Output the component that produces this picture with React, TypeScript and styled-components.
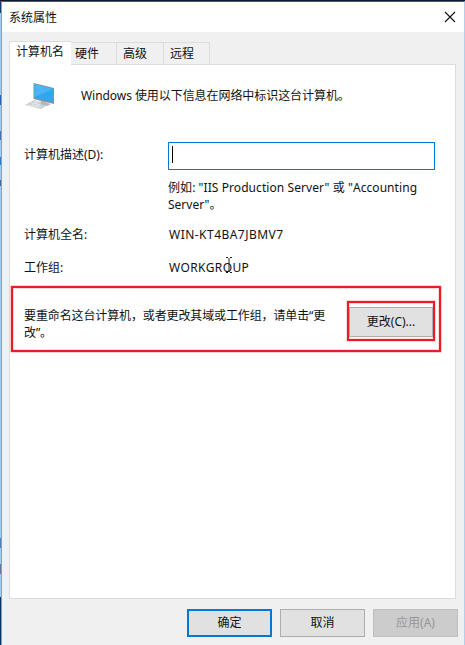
import React from "react";
import styled, { createGlobalStyle } from "styled-components";

const GlobalStyle = createGlobalStyle`
  * { box-sizing: border-box; }
  html, body { margin: 0; padding: 0; overflow: hidden; }
`;

const Desktop = styled.div`
  width: 465px;
  height: 645px;
  padding: 1px 0 0 1px;
  background:
    linear-gradient(#06192f, #06192f) 0 0 / 465px 1px no-repeat,
    linear-gradient(#2463ad, #2463ad) 0 95px / 1px 10px no-repeat,
    linear-gradient(#4a72b8, #4a72b8) 0 131px / 1px 9px no-repeat,
    linear-gradient(#2a7fd0, #2a7fd0) 0 157px / 1px 8px no-repeat,
    linear-gradient(#54649d, #54649d) 0 180px / 1px 6px no-repeat,
    linear-gradient(#4b83bf, #4b83bf) 0 538px / 1px 10px no-repeat,
    linear-gradient(#63779b, #63779b) 0 564px / 1px 10px no-repeat,
    linear-gradient(#123e70 0 13px, #a3cbee 13px 597px, #073361 597px);
  font-family: "Noto Sans", "Noto Sans CJK SC", sans-serif;
  font-size: 12px;
  color: #111;
`;

const Dialog = styled.main`
  height: 644px;
  display: flex;
  flex-direction: column;
  background: #f0f0f0;
  border: 1px solid #65a9df;
  border-top-color: #1869b0;
  border-right-color: #b4cfe9;
  border-bottom: 0;
`;

const TitleBar = styled.header`
  height: 30px;
  flex: none;
  display: flex;
  align-items: center;
  justify-content: space-between;
  padding: 0 8px 1px 7px;
  background: #fff;
  svg { display: block; }
`;

const TabBar = styled.nav`
  height: 32px;
  padding: 8px 0 0 7px;
  display: flex;
  align-items: flex-end;
`;

const Tab = styled.div<{ $w: number; $active?: boolean; $pad: number }>`
  width: ${(p) => p.$w}px;
  height: ${(p) => (p.$active ? 24 : 22)}px;
  margin-bottom: ${(p) => (p.$active ? -1 : 0)}px;
  padding-left: ${(p) => p.$pad}px;
  line-height: ${(p) => (p.$active ? 20 : 21)}px;
  white-space: nowrap;
  position: relative;
  z-index: ${(p) => (p.$active ? 1 : 0)};
  background: ${(p) => (p.$active ? "#fff" : "#f0f0f0")};
  border: 1px solid #dcdcdc;
  border-bottom-width: 0;
  border-left-width: ${(p) => (p.$active ? 1 : 0)}px;
  border-right-width: ${(p) => (p.$active ? 0 : 1)}px;
`;

const Panel = styled.section`
  width: 447px;
  height: 535px;
  margin-left: 7px;
  flex: none;
  background: #fff;
  border: 1px solid #dcdcdc;
`;

const Intro = styled.div`
  height: 77px;
  padding: 16px 0 0 13px;
  display: flex;
  svg { width: 36px; height: 30px; margin-right: 22px; }
`;

const IntroText = styled.p`
  margin: 7px 0 0;
  line-height: 16px;
  letter-spacing: -0.06px;
  white-space: nowrap;
`;

const Row = styled.div<{ $h: number }>`
  display: grid;
  grid-template-columns: 144px 267px;
  height: ${(p) => p.$h}px;
  padding-left: 14px;
  align-items: start;
  line-height: 16px;
`;

const Label = styled.label<{ $top?: number }>`
  padding-top: ${(p) => p.$top ?? 0}px;
  white-space: nowrap;
`;

const DescriptionField = styled.div`
  height: 28px;
  padding: 3px 0 0 3px;
  border: 1px solid #0078d7;
`;

const Caret = styled.div`
  width: 1px;
  height: 17px;
  background: #000;
`;

const Hint = styled.p`
  margin: 0;
  padding: 9px 0 0 0;
  line-height: 17px;
  white-space: nowrap;
`;

const Spaced = styled.span<{ $ls: number }>`
  letter-spacing: ${(p) => p.$ls}px;
`;

const Value = styled.div`
  padding-left: 1px;
  position: relative;
  white-space: nowrap;
`;

const TextCursor = styled.svg`
  position: absolute;
  left: 57px;
  top: -3px;
  width: 8px;
  height: 17px;
`;

const RenameRow = styled.div`
  width: 430px;
  height: 66px;
  margin-left: 1px;
  padding: 0 4px 0 11px;
  display: flex;
  justify-content: space-between;
  border: 2px solid #ed1c24;
  box-shadow: 0 0 0 0.5px #f6a5a8, inset 0 0 0 1px #fbdadb;
`;

const RenameText = styled.p`
  margin: 19px 0 0;
  line-height: 17px;
  letter-spacing: -0.12px;
  white-space: nowrap;
`;

const Highlight = styled.div`
  width: 88px;
  height: 40px;
  margin-top: 13px;
  padding: 4px 0 2px;
  border: 2px solid #ed1c24;
  box-shadow: 0 0 0 1px #fbdadb, inset 0 0 0 1px #fbdadb;
  background: #fff;
`;

const Button = styled.button<{ $kind?: "primary" | "disabled" | "inline" }>`
  display: block;
  width: ${(p) => (p.$kind === "inline" ? "100%" : "85px")};
  height: ${(p) => (p.$kind === "inline" ? 30 : 28)}px;
  padding: 0;
  font: inherit;
  line-height: 24px;
  color: ${(p) => (p.$kind === "disabled" ? "#969696" : "#111")};
  background: ${(p) => (p.$kind === "disabled" ? "#cccccc" : "#e1e1e1")};
  border: ${(p) =>
    p.$kind === "primary"
      ? "2px solid #0078d7"
      : p.$kind === "disabled"
        ? "1px solid #bfbfbf"
        : "1px solid #adadad"};
`;

const Footer = styled.footer`
  display: flex;
  justify-content: flex-end;
  gap: 8px;
  padding: 10px 6px 0 0;
`;

const ComputerIcon = () => (
  <svg viewBox="0 0 36 30" fill="none">
    <path d="m2 24 9-5 16 3-9 6z" fill="#c9cdd0" />
    <path d="m5 24 13 2m-10-4 13 2m-10-4 13 2M8 25l9-6m-5 7 9-5" stroke="#eef0f1" strokeWidth=".8" />
    <path d="m18 19 5 1v2l5 1-4 2-8-2 2-1z" fill="#b3b8bc" />
    <path d="m10.500 2 20.500 5v16l-20.500-5z" fill="#85939e" />
    <path d="m11.500 3 18.500 5v13l-18.500-4z" fill="#31a5ee" />
    <path d="m11.500 3 18.500 5-18.500 8z" fill="#4ab5f5" />
  </svg>
);

export default function App() {
  return (
    <>
      <GlobalStyle />
      <Desktop>
        <Dialog>
          <TitleBar>
            <span>系统属性</span>
            <svg width="12" height="12" viewBox="0 0 12 12">
              <path d="m1 1 10 10M11 1 1 11" stroke="#111" strokeWidth="1.1" />
            </svg>
          </TitleBar>
          <TabBar>
            <Tab $w={62} $pad={6} $active>计算机名</Tab>
            <Tab $w={46} $pad={4}>硬件</Tab>
            <Tab $w={47} $pad={6}>高级</Tab>
            <Tab $w={46} $pad={6}>远程</Tab>
          </TabBar>
          <Panel>
            <Intro>
              <ComputerIcon />
              <IntroText>Windows 使用以下信息在网络中标识这台计算机。</IntroText>
            </Intro>
            <Row $h={85}>
              <Label $top={5}>计算机描述(D):</Label>
              <div>
                <DescriptionField><Caret /></DescriptionField>
                <Hint>
                  <Spaced $ls={0.07}>例如: "IIS Production Server" 或 "Accounting</Spaced>
                  <br />
                  Server"。
                </Hint>
              </div>
            </Row>
            <Row $h={33}>
              <Label>计算机全名:</Label>
              <Value><Spaced $ls={0.47}>WIN-KT4BA7JBMV7</Spaced></Value>
            </Row>
            <Row $h={26}>
              <Label>工作组:</Label>
              <Value>
                <Spaced $ls={0.4}>WORKGROUP</Spaced>
                <TextCursor viewBox="0 0 8 17" fill="none" stroke="#222">
                  <path d="M1 .5h2M5 .5h2M1 15.5h2M5 15.5h2M4 1v14" />
                </TextCursor>
              </Value>
            </Row>
            <RenameRow>
              <RenameText>
                要重命名这台计算机，或者更改其域或工作组，请单击“更<br />改”。
              </RenameText>
              <Highlight>
                <Button $kind="inline">更改(C)...</Button>
              </Highlight>
            </RenameRow>
          </Panel>
          <Footer>
            <Button $kind="primary">确定</Button>
            <Button>取消</Button>
            <Button $kind="disabled" disabled>应用(A)</Button>
          </Footer>
        </Dialog>
      </Desktop>
    </>
  );
}
